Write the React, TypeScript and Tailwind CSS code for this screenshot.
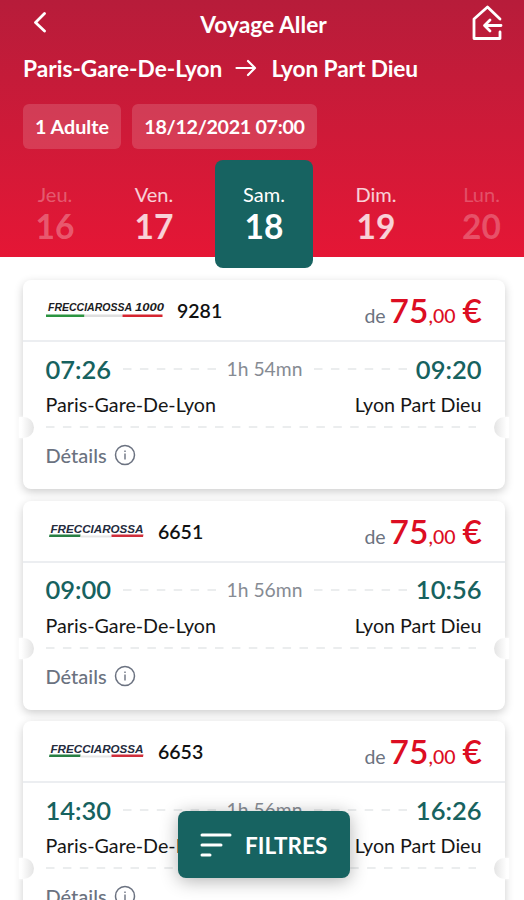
import React from 'react';
import clsx from 'clsx';

interface Day {
  label: string;
  num: number;
  className: string;
}

interface Train {
  model: string;
  number: string;
  departure: string;
  arrival: string;
  duration: string;
}

const DAYS: Day[] = [
  { label: 'Jeu.', num: 16, className: 'w-[110px] text-white/30' },
  { label: 'Ven.', num: 17, className: 'w-[88px] mr-[17px] text-white/80' },
  { label: 'Sam.', num: 18, className: 'w-[98px] rounded-lg bg-[#176361] text-white' },
  { label: 'Dim.', num: 19, className: 'w-[126px] text-white/80' },
  { label: 'Lun.', num: 20, className: 'w-[85px] text-white/25' },
];

const TRAINS: Train[] = [
  { model: 'FRECCIAROSSA1000', number: '9281', departure: '07:26', arrival: '09:20', duration: '1h 54mn' },
  { model: 'FRECCIAROSSA', number: '6651', departure: '09:00', arrival: '10:56', duration: '1h 56mn' },
  { model: 'FRECCIAROSSA', number: '6653', departure: '14:30', arrival: '16:26', duration: '1h 56mn' },
];

const BrandLogo: React.FC<{ model: string }> = ({ model }) => {
  if (model === 'FRECCIAROSSA1000') {
    return (
      <svg width="122" height="20" viewBox="0 0 122 20" className="shrink-0">
        <g fontFamily="Liberation Sans" fontSize="11" fontWeight="700" fontStyle="italic" fill="#1c1c22">
          <text x="2" y="11" textLength="84" lengthAdjust="spacingAndGlyphs">FRECCIAROSSA</text>
          <text x="89" y="11" textLength="29" lengthAdjust="spacingAndGlyphs">1000</text>
        </g>
        <path d="M0 14.500h38.500V17H0z" fill="#2b9440" />
        <path d="M38.500 14.500h38V17h-38z" fill="#dedede" />
        <path d="M76.500 14.500h40V17h-40z" fill="#d5242f" />
      </svg>
    );
  }
  return (
    <svg width="100" height="20" viewBox="0 0 100 20" className="shrink-0">
      <text x="4.500" y="11.500" fontFamily="Liberation Sans" fontSize="10.500" fontWeight="700" fontStyle="italic" fill="#242b3d" textLength="93" lengthAdjust="spacingAndGlyphs">FRECCIAROSSA</text>
      <path d="M3.500 13.500h31V16H3z" fill="#277f43" />
      <path d="M34.500 14.500h31v2h-31z" fill="#e6e6e6" />
      <path d="M65.500 13.500h32L97 16H65.500z" fill="#cf2e3b" />
    </svg>
  );
};

const DashLine: React.FC<{ width: number }> = ({ width }) => (
  <svg width={width} height="2" className="block shrink-0">
    <line x1="0" y1="1" x2={width} y2="1" stroke="#e5e7e9" strokeWidth="1.5" strokeDasharray="8.500 8.400" />
  </svg>
);

const TrainCard: React.FC<{ train: Train }> = ({ train }) => (
  <article className="relative h-[209px] shrink-0 rounded-lg bg-white shadow-[0_3px_10px_rgba(0,0,0,0.2)]">
    <div className="flex h-[62px] items-center border-b-2 border-[#eceef1] pl-[23px] pr-[23px]">
      <BrandLogo model={train.model} />
      <span className={clsx('pt-0.5 text-[19.500px] font-semibold leading-6 text-[#111]', train.model === 'FRECCIAROSSA' ? 'ml-3' : 'ml-[9px]')}>
        {train.number}
      </span>
      <div className="ml-auto flex items-baseline pt-1.5 leading-8 text-[#dc0d22]">
        <span className="mr-1 text-[19.500px] text-[#6b7280]">de</span>
        <span className="text-[33.500px] font-semibold">75</span>
        <span className="text-[19.500px] font-medium">,00</span>
        <span className="ml-[7px] text-[33.500px] font-semibold">€</span>
      </div>
    </div>

    <div className="pl-[22.500px] pr-[23.500px]">
      <div className="mt-[11px] flex h-8 items-center justify-between text-[25.500px] font-semibold text-[#17625f]">
        <span className="w-[77px]">{train.departure}</span>
        <DashLine width={93} />
        <span className="w-[98px] pt-px text-center text-[19.300px] font-normal text-[#868b93]">{train.duration}</span>
        <DashLine width={93} />
        <span className="w-[75px] text-right">{train.arrival}</span>
      </div>
      <div className="mt-2 flex h-6 items-center justify-between text-[19.700px] text-[#161616]">
        <span>Paris-Gare-De-Lyon</span>
        <span>Lyon Part Dieu</span>
      </div>
      <div className="mt-[9px]">
        <DashLine width={430} />
      </div>
      <div className="mt-[15px] flex h-6 items-center gap-[7px] text-[20px] font-medium text-[#6b7280]">
        <span>Détails</span>
        <svg width="22" height="22" viewBox="0 0 22 22" fill="none" stroke="currentColor">
          <circle cx="11" cy="11" r="9.500" strokeWidth="1.500" />
          <path d="M11 9.500v6M11 6.500v1.500" strokeWidth="1.400" />
        </svg>
      </div>
    </div>

    {/* ticket notches */}
    <span className="absolute -left-1 top-[137px] h-[21px] w-[15px] rounded-r-full bg-linear-to-r from-white from-15% to-[#e4e4e4] shadow-[0_0_3px_#fff]" />
    <span className="absolute -right-1 top-[137px] h-[21px] w-[15px] rounded-l-full bg-linear-to-l from-white from-15% to-[#e4e4e4] shadow-[0_0_3px_#fff]" />
  </article>
);

const App: React.FC = () => {
  return (
    <div className="relative flex h-[900px] w-[524px] flex-col overflow-hidden bg-white font-['Lato',sans-serif]">
      <header className="h-[257px] shrink-0 bg-linear-to-b from-[#b71c3a] to-[#e51635] text-white">
        <div className="flex h-[46px] items-center justify-between pl-[33px] pr-[21px]">
          <svg width="14" height="22" viewBox="0 0 14 22" fill="none" stroke="currentColor" strokeWidth="2.800" strokeLinecap="round" strokeLinejoin="round">
            <path d="M11.500 1.500 2.500 10.500l9 8.500" />
          </svg>
          <h1 className="ml-[9px] pt-0.5 text-[22.800px] font-bold">Voyage Aller</h1>
          <svg width="32" height="36" viewBox="0 0 32 36" fill="none" stroke="currentColor" strokeWidth="2.800" strokeLinecap="round" strokeLinejoin="round">
            <path d="M29 14 16.500 2 3 14V33.500H29V27" />
            <path d="M30 20.500H14M19 15l-5.500 5.500 5.500 5.500" />
          </svg>
        </div>

        <div className="mt-[9px] flex h-7 items-center pl-[23px] text-[22.700px] font-bold">
          <span>Paris-Gare-De-Lyon</span>
          <svg width="22" height="18" viewBox="0 0 22 18" fill="none" stroke="currentColor" strokeWidth="2.200" strokeLinecap="round" strokeLinejoin="round" className="mb-0.5 ml-[13px] mr-3.5">
            <path d="M1.500 9H19.500M13 2l7 7-7 7" />
          </svg>
          <span className="tracking-[-0.1px]">Lyon Part Dieu</span>
        </div>

        <div className="mt-[21px] flex h-[45px] gap-[11px] pl-[23px] text-[19.700px] font-bold">
          <span className="flex w-[98px] items-center justify-center rounded-md bg-white/15">1 Adulte</span>
          <span className="flex w-[185px] items-center justify-center rounded-md bg-white/15 tracking-[-0.3px]">18/12/2021 07:00</span>
        </div>

        <nav className="mt-[11px] flex">
          {DAYS.map((day) => (
            <div key={day.num} className={clsx('flex h-[108px] shrink-0 flex-col items-center pt-[22px]', day.className)}>
              <span className="text-[20px] leading-6">{day.label}</span>
              <span className="mt-0.5 text-[33.500px] font-bold leading-9">{day.num}</span>
            </div>
          ))}
        </nav>
      </header>

      <main className="mt-[23px] flex flex-col gap-[11.500px] pl-[23px] pr-[19px]">
        {TRAINS.map((train) => (
          <TrainCard key={train.number} train={train} />
        ))}
      </main>

      <button className="absolute left-[178px] top-[811px] flex h-[67px] w-[172px] items-center rounded-lg bg-[#176361] pl-[22px] text-white shadow-[0_3px_18px_rgba(0,0,0,0.3)]">
        <svg width="33" height="26" viewBox="0 0 33 26" fill="none" stroke="currentColor" strokeWidth="3" strokeLinecap="round">
          <path d="M2 3h28M2 13h19M2 23h8" />
        </svg>
        <span className="ml-3 pt-0.5 text-[22.500px] font-bold">FILTRES</span>
      </button>
    </div>
  );
};

export default App;
